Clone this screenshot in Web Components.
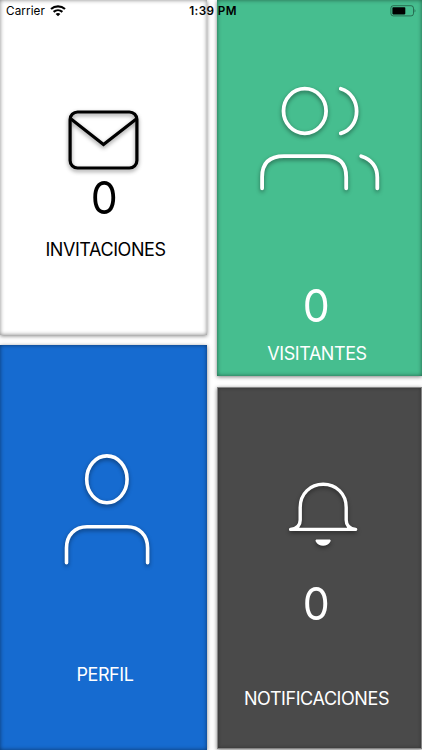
<!DOCTYPE html>
<html lang="es">
<head>
<meta charset="utf-8">
<meta name="viewport" content="width=device-width, initial-scale=1">
<title>Inicio</title>
<style>
   body {
      margin: 0;
      background: #fff;
      font-family: Inter, "Liberation Sans", sans-serif;
      overflow: hidden;
   }
</style>
</head>
<body>

<app-home></app-home>

<script>
// barra de estado, va encima de las tarjetas
class StatusBar extends HTMLElement {

   constructor() {
      super()
      this.attachShadow({ mode: 'open' })
   }

   getTemplate() {
      const template = document.createElement("template")
      template.innerHTML = /*html*/`
         <div class="left">
            <span>Carrier</span>
            <svg width="16" height="12" viewBox="0 0 16 12" fill="none" stroke="#000" stroke-width="2.1">
               <path d="M1 4.1 C5 .4 11 .4 15 4.1"/>
               <path d="M3.6 6.9 C6.2 4.6 9.8 4.6 12.4 6.9"/>
               <path d="M5.6 8.9 C7 7.7 9 7.7 10.4 8.9 L8 11.3Z" fill="#000" stroke="none"/>
            </svg>
         </div>
         <b>1:39 PM</b>
         <div class="right">
            <svg width="26" height="12" viewBox="0 0 26 12">
               <rect x=".9" y=".7" width="22.6" height="10.2" rx="2.4" fill="none" stroke="#000" stroke-opacity=".42"/>
               <rect x="2.4" y="2.2" width="12.9" height="7.2" rx=".8"/>
               <path d="M24.6 4 Q26.2 5.8 24.6 7.6Z" fill-opacity=".5"/>
            </svg>
         </div>
         ${this.getStyles()}
      `
      return template
   }

   getStyles() {
      return /*html*/`
         <style>
            :host {
               display: grid;
               grid-template-columns: 1fr auto 1fr;
               align-items: center;
               box-sizing: border-box;
               height: 22px;
               padding: 0 6px;
               font-size: 11.7px;
               color: #000;
            }
            .left { display: flex; align-items: center; gap: 5px; letter-spacing: .1px; }
            .right { display: flex; justify-content: flex-end; }
            b { font-weight: 600; margin-left: 4px; letter-spacing: .4px; }
            svg { display: block; }
         </style>
      `
   }

   connectedCallback() {
      this.shadowRoot.appendChild(this.getTemplate().content.cloneNode(true))
   }
}

// tarjeta del menu: icono por slot, contador opcional y titulo
class MenuCard extends HTMLElement {

   constructor() {
      super()
      this.attachShadow({ mode: 'open' })
   }

   getTemplate() {
      const template = document.createElement("template")
      template.innerHTML = /*html*/`
         <slot name="icon"></slot>
         <slot name="count"></slot>
         <slot></slot>
         ${this.getStyles()}
      `
      return template
   }

   getStyles() {
      return /*html*/`
         <style>
            :host {
               display: flex;
               flex-direction: column;
               align-items: center;
               box-sizing: border-box;
               background: var(--card-bg);
               color: var(--card-color, #fff);
               box-shadow: 0 1px 4px rgba(0, 0, 0, .5), inset 0 0 0 1px var(--card-edge, transparent), inset 0 0 4px rgba(0, 0, 0, .5);
            }
            ::slotted([slot="count"]) {
               font-size: 45px;
               line-height: 46px;
               font-weight: 400;
               transform: scaleX(.95);
            }
            ::slotted(h2) {
               margin: 0;
               font-size: 18px;
               line-height: 22px;
               font-weight: 400;
               letter-spacing: -.42px;
            }
         </style>
      `
   }

   connectedCallback() {
      this.shadowRoot.appendChild(this.getTemplate().content.cloneNode(true))
   }
}

class MenuIcon extends HTMLElement {

   constructor() {
      super()
      this.attachShadow({ mode: 'open' })
   }

   getShape() {
      const shapes = {
         mail: /*html*/`
            <svg width="72" height="60" viewBox="0 0 72 60" stroke-width="3.2">
               <rect x="2.1" y="2" width="66.8" height="56" rx="7.5"/>
               <path d="M3 9 L35.5 34.5 L68.3 9" stroke-linecap="butt" stroke-linejoin="miter"/>
            </svg>`,
         users: /*html*/`
            <svg width="120" height="106" viewBox="0 0 120 106" stroke-width="3.8">
               <ellipse cx="44.8" cy="26" rx="21.3" ry="22.3"/>
               <path d="M80.8 3.8 C101.9 10.2 101.9 42.4 80.8 48.4"/>
               <path d="M2.1 103.3 V92 Q2.1 71.2 24 71.2 H64.5 Q86.2 71.2 86.2 92 V103.3"/>
               <path d="M101.2 71.2 Q117.3 76.5 117.3 92.5 V103.3"/>
            </svg>`,
         user: /*html*/`
            <svg width="86" height="112" viewBox="0 0 86 112" stroke-width="3.6">
               <ellipse cx="42.9" cy="25.3" rx="20.2" ry="23.4"/>
               <path d="M2.5 108.8 V94 C2.5 81 11 72.7 23 72.7 H63 C75 72.7 83.6 81 83.6 94 V108.8"/>
            </svg>`,
         bell: /*html*/`
            <svg width="70" height="66" viewBox="0 0 70 66" stroke-width="3.4">
               <path d="M2.6 47.4 C9 46.8 12.2 44 12.2 38 V25.5 C12.2 11.5 22.5 2.3 35.2 2.3 C47.9 2.3 58.2 11.5 58.2 25.5 V38 C58.2 44 61.4 46.8 67.6 47.4 Z"/>
               <path d="M28.4 57.5 H41.8 Q43.3 58 42.3 59.7 C39.5 65 30.7 65 27.9 59.7 Q26.9 58 28.4 57.5Z" fill="currentColor" stroke="none"/>
            </svg>`
      }
      return shapes[this.getAttribute("name")]
   }

   connectedCallback() {
      this.shadowRoot.innerHTML = /*html*/`
         <style>
            :host { display: block; }
            svg {
               display: block;
               overflow: visible;
               fill: none;
               stroke: currentColor;
               stroke-linecap: round;
               stroke-linejoin: round;
               filter: drop-shadow(0 2px 2px rgba(0, 0, 0, .42));
            }
         </style>
         ${this.getShape()}
      `
   }
}

class AppHome extends HTMLElement {

   constructor() {
      super()
      this.attachShadow({ mode: 'open' })
   }

   getTemplate() {
      const template = document.createElement("template")
      template.innerHTML = /*html*/`
         <main>
            <div class="col">
               <menu-card class="invitaciones">
                  <menu-icon slot="icon" name="mail"></menu-icon>
                  <span slot="count">0</span>
                  <h2>INVITACIONES</h2>
               </menu-card>
               <menu-card class="perfil">
                  <menu-icon slot="icon" name="user"></menu-icon>
                  <h2>PERFIL</h2>
               </menu-card>
            </div>
            <div class="col">
               <menu-card class="visitantes">
                  <menu-icon slot="icon" name="users"></menu-icon>
                  <span slot="count">0</span>
                  <h2>VISITANTES</h2>
               </menu-card>
               <menu-card class="notificaciones">
                  <menu-icon slot="icon" name="bell"></menu-icon>
                  <span slot="count">0</span>
                  <h2>NOTIFICACIONES</h2>
               </menu-card>
            </div>
         </main>
         <status-bar></status-bar>
         ${this.getStyles()}
      `
      return template
   }

   getStyles() {
      return /*html*/`
         <style>
            :host {
               display: block;
               position: relative;
               height: 750px;
               overflow: hidden;
            }
            status-bar { position: absolute; top: 0; left: 0; right: 0; }
            main {
               display: grid;
               grid-template-columns: 207px 205px;
               column-gap: 10px;
               height: 100%;
            }
            .col { display: flex; flex-direction: column; gap: 10px; }

            .invitaciones {
               --card-bg: #fff;
               --card-color: #000;
               height: 335px;
               padding-top: 109.5px;
            }
            .invitaciones span { margin-top: 5px; margin-left: 2px; }
            .invitaciones h2 { margin-top: 18px; padding-left: 4px; }

            .perfil {
               --card-bg: #166bd0;
               flex: 1;
               padding: 109px 0 0 8px;
            }
            .perfil menu-icon { margin-right: 1px; }
            .perfil h2 { margin-top: 98px; margin-right: 5px; }

            .visitantes {
               --card-bg: #46be8f;
               height: 376px;
               padding-top: 85px;
            }
            .visitantes menu-icon { margin-left: 1px; }
            .visitantes span { margin-top: 92px; margin-right: 6px; }
            .visitantes h2 { margin-top: 14px; margin-right: 5px; }

            .notificaciones {
               --card-bg: #4a4a4a;
               --card-edge: #858585;
               height: 362px;
               margin-top: 1px;
               padding-top: 95px;
            }
            .notificaciones menu-icon { margin-left: 7px; }
            .notificaciones span { margin-top: 33px; margin-right: 6px; }
            .notificaciones h2 { margin-top: 61px; margin-right: 6px; }
         </style>
      `
   }

   connectedCallback() {
      this.shadowRoot.appendChild(this.getTemplate().content.cloneNode(true))
   }
}

customElements.define('status-bar', StatusBar)
customElements.define('menu-card', MenuCard)
customElements.define('menu-icon', MenuIcon)
customElements.define('app-home', AppHome)
</script>
</body>
</html>
